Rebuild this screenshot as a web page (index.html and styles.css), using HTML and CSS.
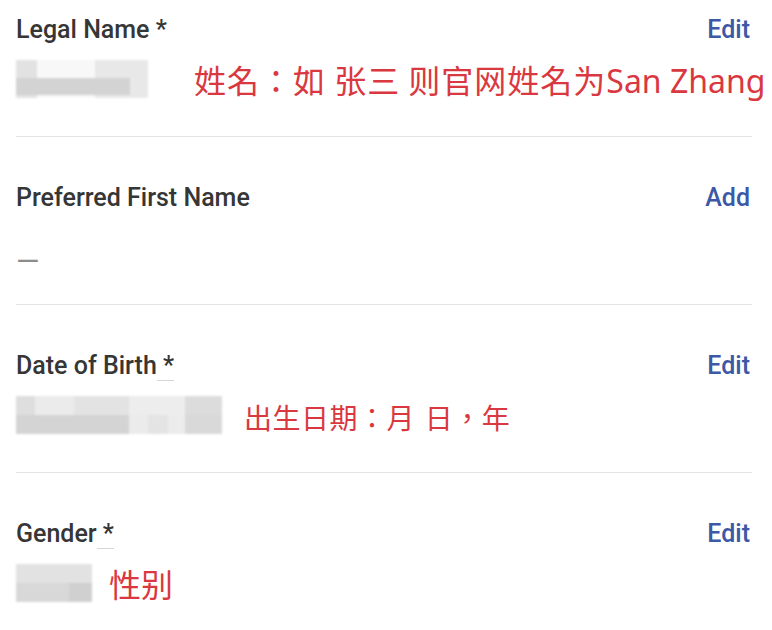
FILE: index.html
```html
<!DOCTYPE html>
<html lang="en">
<head>
<meta charset="utf-8">
<title>Personal Information</title>
<link rel="stylesheet" href="styles.css">
</head>
<body>
<div class="list">
  <section class="item">
    <div class="head">
      <span class="label">Legal Name *</span>
      <a class="action">Edit</a>
    </div>
    <div class="value">
      <span class="blur blur-name"></span>
      <span class="note note-name">姓名：如 张三 则官网姓名为<span class="latin">San Zhang</span></span>
    </div>
  </section>
  <section class="item">
    <div class="head">
      <span class="label">Preferred First Name</span>
      <a class="action">Add</a>
    </div>
    <div class="value">
      <span class="empty">—</span>
    </div>
  </section>
  <section class="item">
    <div class="head">
      <span class="label">Date of Birth<span class="req"> *</span></span>
      <a class="action">Edit</a>
    </div>
    <div class="value">
      <span class="blur blur-dob"></span>
      <span class="note note-dob">出生日期：月 日，年</span>
    </div>
  </section>
  <section class="item">
    <div class="head">
      <span class="label">Gender<span class="req"> *</span></span>
      <a class="action">Edit</a>
    </div>
    <div class="value">
      <span class="blur blur-gender"></span>
      <span class="note note-gender">性别</span>
    </div>
  </section>
</div>
</body>
</html>
```

FILE: styles.css
```css
html, body {
  margin: 0;
  padding: 0;
  background: #ffffff;
}

body {
  font-family: "Roboto", "Liberation Sans", sans-serif;
  color: #333333;
}

.list {
  padding: 0 20px 0 16px;
  overflow: hidden;
}

.item {
  padding: 47px 0 35px;
  border-bottom: 1px solid #e4e4e4;
}

.item:first-child {
  padding-top: 16px;
}

.head {
  display: flex;
  justify-content: space-between;
  align-items: baseline;
  height: 28px;
  line-height: 28px;
  font-size: 25px;
  font-weight: 500;
}

.label {
  color: #363636;
}

.req {
  border-bottom: 1px solid #d6d6d6;
}

.action {
  color: #3c58a6;
  margin-right: 2px;
  cursor: pointer;
}

.value {
  display: flex;
  align-items: flex-end;
  height: 44px;
  margin-top: 13px;
  white-space: nowrap;
}

.empty {
  font-size: 30px;
  line-height: 16px;
  color: #8c8c8c;
}

.blur {
  display: block;
  height: 38px;
  margin-bottom: 3px;
  flex: none;
  filter: blur(1.2px);
}

.blur-name {
  width: 132px;
  background:
    linear-gradient(to bottom, transparent 0 48%, #d3d3d3 48% 92%, transparent 92%),
    linear-gradient(to right, #e2e2e2 0 16%, #f8f8f8 16% 60%, #e8e8e8 60% 100%);
  background-size: 114px 100%, 100% 100%;
  background-repeat: no-repeat;
}

.blur-dob {
  width: 206px;
  background:
    linear-gradient(to right, #d4d4d4 0 55%, #ebebeb 55% 64%, #e4e4e4 64% 74%, #ececec 74% 82%, #d9d9d9 82% 100%) bottom / 100% 50% no-repeat,
    linear-gradient(to right, #dedede 0 9%, #ebebeb 9% 28%, #e3e3e3 28% 55%, #ededed 55% 82%, #dcdcdc 82% 100%) top / 100% 50% no-repeat;
}

.blur-gender {
  width: 76px;
  background:
    linear-gradient(to right, #d8d8d8 0 70%, #d0d0d0 70% 100%) bottom / 100% 50% no-repeat,
    linear-gradient(to right, #e2e2e2 0 100%) top / 100% 50% no-repeat;
}

.note {
  font-family: "Noto Sans CJK TC", "Noto Sans CJK SC", "Noto Sans", sans-serif;
  line-height: 40px;
  color: #da3840;
}

.note-name {
  font-size: 32px;
  letter-spacing: 1px;
  margin-left: 46px;
}

.note-dob {
  font-size: 28px;
  letter-spacing: 0.5px;
  word-spacing: 3px;
  margin-left: 22px;
}

.note-gender {
  font-size: 32px;
  margin-left: 17px;
  margin-bottom: 2px;
}

.latin {
  font-family: "Noto Sans", "Open Sans", sans-serif;
  font-size: 32px;
  letter-spacing: 0;
}
```
